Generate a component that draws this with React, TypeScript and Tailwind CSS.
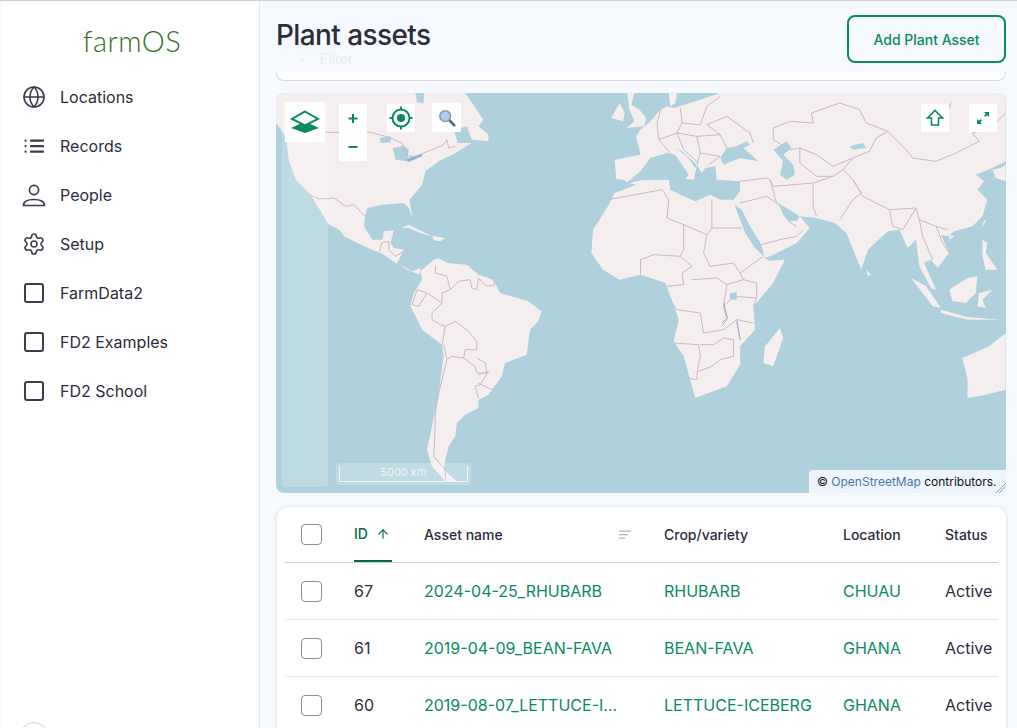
import React from 'react';
import { ArrowUp, Globe, Settings } from 'lucide-react';

const navItems = ['Locations', 'Records', 'People', 'Setup', 'FarmData2', 'FD2 Examples', 'FD2 School'];

const rows = [
    { id: 67, name: '2024-04-25_RHUBARB', crop: 'RHUBARB', location: 'CHUAU' },
    { id: 61, name: '2019-04-09_BEAN-FAVA', crop: 'BEAN-FAVA', location: 'GHANA' },
    { id: 60, name: '2019-08-07_LETTUCE-ICEBERG', crop: 'LETTUCE-ICEBERG', location: 'GHANA' },
];

// map shapes, traced at 3x of the map box
const westLand = [
    '0,0 420,0 425,28 445,30 445,0 570,0 625,80 610,100 640,125 640,145 590,140 575,100 535,110 548,150 590,150 535,183 490,205 450,235 440,275 402,320 412,378 400,345 385,330 320,335 275,345 268,370 265,400 290,440 320,440 325,415 355,412 345,450 355,465 385,470 375,490 365,510 410,535 435,525 432,545 395,530 360,510 320,482 270,462 205,430 190,410 160,395 125,340 105,305 60,260 38,200 30,130 0,90',
    '435,535 475,500 490,495 515,510 575,515 610,545 655,560 675,600 760,625 800,655 790,685 765,710 755,785 690,810 680,850 640,905 610,920 610,945 570,965 545,990 540,1030 520,1060 510,1100 505,1130 545,1165 510,1165 470,1120 455,1070 470,1000 490,900 505,790 500,755 440,710 405,640 415,600 440,560',
    '378,405 400,395 440,415 470,430 440,422 400,405',
    '470,428 510,435 495,445 475,442',
    '1010,75 1035,30 1050,60 1045,85',
    '1058,0 1080,0 1070,35 1095,50 1115,75 1110,100 1055,105 1080,85 1065,50',
];

const westBorders = [
    '100,305 130,318 175,315 210,340 235,335 268,370',
    '148,118 285,118 330,130 380,150 395,190 420,190 470,170 505,155 515,140 520,165 540,160',
    '312,476 318,450 340,445 340,470 360,490 385,475',
    '365,510 385,525',
    '480,520 480,540 515,550 525,590 500,600 500,630 455,600 425,590 410,635 430,640 455,600',
    '500,630 470,660 470,680 495,695 510,700 500,755',
    '510,700 540,685 580,715 605,745 605,770 570,770 565,795 600,820 605,840 635,840 630,810 605,795',
    '505,755 515,800 505,840 490,900 480,960 478,1040 475,1090 510,1130 510,1160',
    '515,800 530,790 565,795',
    '610,845 640,835 615,875 600,880 610,915',
    '610,870 650,890',
    '525,590 550,565 585,560 590,585 605,590 610,555 635,580 660,575 650,550',
    '953,412 975,410 1000,365 1025,355 1098,410',
    '1025,355 1045,380 1052,465 985,465 955,460',
    '985,465 1000,500 985,515 1030,545',
    '1052,465 1075,490 1098,470',
    '1030,510 1075,515 1070,555 1098,505',
];

const eastLand = [
    '1100,0 1100,205 1060,225 1010,245 1035,265 1015,290 1045,320 1030,370 1000,400 945,415 925,430 905,425 930,480 895,525 875,500 850,510 845,490 890,590 875,585 840,520 830,440 805,465 780,410 745,415 685,470 665,530 620,420 585,390 530,375 480,370 510,405 470,450 390,490 372,495 390,503 435,500 400,570 340,640 345,710 300,760 300,815 260,880 165,915 130,790 100,745 115,680 100,635 75,570 0,545 -63,560 -113,530 -148,480 -143,410 -98,340 -78,300 -13,275 -38,270 -48,262 -73,258 -78,200 0,185 -13,130 0,110 25,90 60,50 80,40 100,45 180,20 240,0',
    '375,760 420,705 430,735 400,820 370,810',
    '680,530 695,545 685,550',
    '815,555 860,580 905,645 880,640',
    '905,650 985,672 1085,680 985,680 905,660',
    '930,590 985,555 1015,550 1010,600 980,630 940,625',
    '1020,600 1060,590 1030,620 1040,645 1015,640',
    '1030,440 1045,450 1040,480 1075,530 1040,530 1030,490',
    '1035,380 1040,385 1028,405',
    '930,425 945,430 930,440',
    '1060,230 1085,225 1100,215 1100,265 1070,255',
    '970,795 1050,760 1100,720 1100,890 1040,905 985,915 985,860',
    '85,0 110,0 105,30 90,40',
];

const eastWater = [
    '-40,268 0,235 30,195 80,180 105,185 145,245 135,258 160,260 170,215 185,240 195,225 225,220 230,260 300,265 300,295 280,320 240,320 210,305 165,325 130,310 90,290 85,260 0,262 -40,272',
    '105,165 125,175 170,215 165,225 140,190',
    '240,195 260,165 290,160 320,145 330,155 310,165 355,205 300,195 250,215',
    '400,170 440,145 455,165 430,185 460,215 465,245 440,260 420,245 430,205',
    '283,335 305,350 330,400 365,455 372,490 345,465 315,420',
    '415,330 440,345 480,370 470,385 445,385 430,365',
    '270,600 290,598 290,620 270,620',
    '630,160 670,150 680,165 640,170',
    '920,50 938,25 925,65',
];

const eastBorders = [
    '400,140 400,105 450,85 520,90 515,60 600,30 660,50 680,90 745,115 800,170 820,195 890,205 950,180 1020,145 1000,120 1060,100 1100,60',
    '400,140 450,170 480,165 530,185 580,220 640,195 690,175 710,135 745,115',
    '640,195 610,230 640,260 670,310 750,350 830,345 840,380 890,400 925,410',
    '640,260 665,300 640,320 600,380',
    '520,270 520,340 530,370',
    '400,280 520,270 580,250 610,230',
    '480,165 480,210 530,250 580,250',
    '390,260 410,330 420,340',
    '300,265 380,255 390,260 400,280',
    '300,330 380,310 410,330',
    '365,455 420,440 470,430 490,410',
    '445,385 470,400',
    '750,350 760,400 790,410 830,345',
    '840,380 850,430 880,500',
    '890,400 910,450 930,480',
    '65,290 85,320 80,375 130,395 130,470 120,490',
    '-98,320 65,290',
    '215,320 215,405 305,405',
    '130,395 200,425 190,480 210,520 280,510 300,540 370,490',
    '200,425 215,405',
    '120,490 40,485 0,500 0,545',
    '120,490 155,520 125,540 130,575 80,580',
    '155,560 230,555 260,575 310,560 300,540',
    '310,560 350,570 350,615 340,640',
    '260,575 250,640 280,610 350,615',
    '100,635 110,650 180,660 190,720 250,710 290,680 340,690',
    '100,750 175,755 180,790 170,840 170,860 140,855',
    '180,755 220,755 250,735 280,740 280,790 240,800 215,820 175,835',
    '250,640 260,680 245,700',
    '290,680 300,740',
    '60,50 50,90 55,140 90,180',
    '120,45 125,90 180,95 200,40 240,10',
    '200,95 260,70 330,120 340,150',
    '55,140 110,120 170,130 240,125 260,165',
    '110,120 130,170 175,210',
    '170,130 180,180 240,190',
    '180,180 170,215',
    '125,90 110,120',
    '200,95 240,125',
    '240,190 205,215',
];

function WorldMap() {
    return (
        <svg viewBox="0 0 2199 1200" className="w-full h-full block" preserveAspectRatio="none">
            <rect width="2199" height="1200" fill="#aed1dd" />
            {westLand.map((p) => (
                <polygon key={p} points={p} fill="#f5eeee" />
            ))}
            {/* great lakes */}
            <polygon points="312,135 345,130 345,148 315,150" fill="#aed1dd" />
            <polygon points="352,165 385,158 400,170 395,205 360,200" fill="#aed1dd" />
            <polygon points="392,198 440,182 440,190 398,208" fill="#8fb3cf" />
            {westBorders.map((p) => (
                <polyline key={p} points={p} fill="none" stroke="#cbb6ca" strokeWidth="3" />
            ))}
            <g transform="translate(1098 0)">
                {eastLand.map((p) => (
                    <polygon key={p} points={p} fill="#f5eeee" />
                ))}
                {eastBorders.map((p) => (
                    <polyline key={p} points={p} fill="none" stroke="#cbb6ca" strokeWidth="3" />
                ))}
                {eastWater.map((p) => (
                    <polygon key={p} points={p} fill="#aed1dd" />
                ))}
                <polyline points="250,630 262,675 245,690" fill="none" stroke="#8fb3cf" strokeWidth="3" />
                <polyline points="290,685 300,740" fill="none" stroke="#8fb3cf" strokeWidth="3" />
            </g>
        </svg>
    );
}

function NavIcon({ name }: { name: string }) {
    if (name === 'Locations') return <Globe className="w-6 h-6" strokeWidth={1.6} />;
    if (name === 'Setup') return <Settings className="w-6 h-6" strokeWidth={1.6} />;
    if (name === 'Records') {
        return (
            <svg viewBox="0 0 24 24" className="w-6 h-6" fill="#3b3d4c">
                <rect x="8" y="5.5" width="14" height="2.2" rx="0.4" />
                <rect x="8" y="11" width="14" height="2.2" rx="0.4" />
                <rect x="8" y="16.5" width="14" height="2.2" rx="0.4" />
                <rect x="2.5" y="5.5" width="2.2" height="2.2" rx="1" />
                <rect x="2.5" y="11" width="2.2" height="2.2" rx="1" />
                <rect x="2.5" y="16.5" width="2.2" height="2.2" rx="1" />
            </svg>
        );
    }
    if (name === 'People') {
        return (
            <svg viewBox="0 0 24 24" className="w-6 h-6" fill="none" stroke="#3b3d4c" strokeWidth="1.7">
                <circle cx="12" cy="7" r="4.6" />
                <path d="M1.5 22.5c0-4 4-6 10.500-6s10.500 2 10.500 6z" strokeLinejoin="round" />
            </svg>
        );
    }
    return (
        <svg viewBox="0 0 24 24" className="w-6 h-6" fill="none" stroke="#3b3d4c" strokeWidth="2">
            <rect x="3" y="3" width="18" height="18" rx="2" />
        </svg>
    );
}

function MapButton({ className, children }: { className: string; children: React.ReactNode }) {
    return <div className={`absolute bg-white flex items-center justify-center ${className}`}>{children}</div>;
}

function Checkbox() {
    return <div className="w-[21px] h-[21px] rounded-[4px] border border-[#8b8d9c] bg-white" />;
}

export default function App() {
    return (
        <div className="w-full h-screen overflow-hidden flex bg-[#f6f9fe] border-t border-[#cfcfcf] font-['Inter',sans-serif] text-[#2b2d3c]">
            <aside className="w-[258px] shrink-0 ml-[2px] bg-white border-r border-[#e6e8ee] relative">
                <div className="h-[71px] flex items-center justify-center pl-[3px] pt-[7px]">
                    <span className="font-['Lato',sans-serif] font-light text-[29px] leading-none tracking-[0.5px] text-[#2f6f2c]">
                        farmOS
                    </span>
                </div>
                <nav className="flex flex-col">
                    {navItems.map((item) => (
                        <div key={item} className="h-[49px] flex items-center pl-[20px] gap-[14px] text-[16px] text-[#2b2d3c]">
                            <span className="text-[#3b3d4c]">
                                <NavIcon name={item} />
                            </span>
                            {item}
                        </div>
                    ))}
                </nav>
                <div className="absolute left-[18px] top-[721px] w-[28px] h-[28px] rounded-full border border-[#d5d3e0]" />
            </aside>

            <main className="flex-1 min-w-0 pl-[16px] pr-[11px] relative">
                <div className="h-[71px] flex items-center justify-between">
                    <h1 className="text-[28px] font-medium tracking-[-0.6px] text-[#2b2d3c] pb-[4px]">Plant assets</h1>
                    <button className="w-[159px] h-[48px] mt-[5px] rounded-[8px] border-2 border-[#0a8a5f] text-[14px] font-medium text-[#0a8a5f]">
                        Add Plant Asset
                    </button>
                </div>
                <div className="absolute left-[39px] top-[47px] flex items-center gap-[13px] text-[14px] text-[#eaedf2]">
                    <span className="text-[10px]">⌄</span>
                    Filter
                </div>
                <div className="h-[9px] bg-white border border-t-0 border-[#d8d8e0] rounded-b-lg" />

                <div className="relative h-[400px] mt-[12px] rounded-lg overflow-hidden">
                    <WorldMap />

                    <div className="absolute left-[6px] top-[8px] w-[46px] h-[386px] rounded-[4px] bg-white/20" />
                    <div className="absolute left-[60px] top-[370px] w-[135px] h-[22px] rounded-[4px] bg-white/20 px-[3px] pt-[3px]">
                        <div className="h-[16px] border border-t-0 border-[#eef3f5] text-[11px] leading-[13px] text-center text-[#eef3f5]">
                            5000 km
                        </div>
                    </div>

                    <MapButton className="left-[9px] top-[9px] w-[40px] h-[40px]">
                        <svg viewBox="0 0 30 24" className="w-[30px] h-[24px]">
                            <path d="M15 12.500 L29 19 L15 24 L1 19z" fill="#0a8a5f" transform="translate(0 -1)" />
                            <path d="M15 1.500 L28 9 L15 15.500 L2 9z" fill="white" stroke="#0a8a5f" strokeWidth="2" />
                        </svg>
                    </MapButton>
                    <div className="absolute left-[63px] top-[11px] w-[28px] h-[57px] bg-white flex flex-col items-center text-[#0a8a5f]">
                        <svg viewBox="0 0 28 28" className="w-[28px] h-[28px]">
                            <path d="M14 10v9M9.500 14.500h9" stroke="#0a8a5f" strokeWidth="2" />
                        </svg>
                        <svg viewBox="0 0 28 28" className="w-[28px] h-[28px]">
                            <path d="M9.500 15h9" stroke="#0a8a5f" strokeWidth="2" />
                        </svg>
                    </div>
                    <MapButton className="left-[111px] top-[11px] w-[28px] h-[28px]">
                        <svg viewBox="0 0 24 24" className="w-[24px] h-[24px]" fill="none" stroke="#0a8a5f" strokeWidth="2">
                            <circle cx="12" cy="12" r="8.500" />
                            <circle cx="12" cy="12" r="4" fill="#0a8a5f" stroke="none" />
                            <path d="M12 0.500v3.500M12 20v3.500M0.500 12h3.500M20 12h3.500" />
                        </svg>
                    </MapButton>
                    <MapButton className="left-[156px] top-[10px] w-[29px] h-[29px]">
                        <svg viewBox="0 0 20 20" className="w-[18px] h-[18px]">
                            <path d="M12 12l6 6" stroke="#5f6b75" strokeWidth="3" strokeLinecap="round" />
                            <circle cx="8" cy="8" r="6" fill="#a9cdf0" stroke="#8a98a6" strokeWidth="1.600" />
                        </svg>
                    </MapButton>
                    <MapButton className="left-[645px] top-[11px] w-[28px] h-[28px]">
                        <svg viewBox="0 0 18 18" className="w-[18px] h-[18px]">
                            <path d="M9 1.500L16.500 9H12.500V16H5.500V9H1.500z" fill="white" stroke="#0a8a5f" strokeWidth="1.600" />
                        </svg>
                    </MapButton>
                    <MapButton className="left-[693px] top-[11px] w-[28px] h-[28px]">
                        <svg viewBox="0 0 12 12" className="w-[12px] h-[12px]" fill="#0a8a5f">
                            <path d="M7 0h5v5l-1.800-1.800-1.700 1.700-1.400-1.400 1.700-1.700z" />
                            <path d="M5 12H0V7l1.800 1.800 1.700-1.700 1.400 1.400-1.700 1.700z" />
                        </svg>
                    </MapButton>

                    <div className="absolute right-0 bottom-0 w-[197px] h-[23px] bg-[#eff5fd] rounded-tl-[4px] flex items-center pl-[8px] text-[12px] text-[#111] whitespace-nowrap">
                        ©&nbsp;<span className="text-[#4a76a8]">OpenStreetMap</span>&nbsp;contributors.
                        <svg viewBox="0 0 10 10" className="absolute right-0 bottom-0 w-[10px] h-[10px]" stroke="#8a8a8a" strokeWidth="0.800">
                            <path d="M10 0L0 10M10 3L3 10M10 6L6 10" />
                        </svg>
                    </div>
                </div>

                <div className="mt-[13px] w-[731px] bg-white rounded-t-xl border border-[#eceef2] shadow-sm px-[8px]">
                    <div className="grid grid-cols-[53px_70px_240px_179px_102px_70px] h-[56px] items-center border-b border-[#cfcfd4] text-[14px] font-medium text-[#2b2d3c]">
                        <div className="pl-[16px]">
                            <Checkbox />
                        </div>
                        <div className="pl-[16px] h-full">
                            <div className="w-[38px] h-full flex items-center gap-[8px] border-b-2 border-[#046b49] text-[#046b49]">
                                ID
                                <ArrowUp className="w-[14px] h-[14px]" strokeWidth={2} />
                            </div>
                        </div>
                        <div className="pl-[16px] pr-[17px] flex items-center justify-between">
                            Asset name
                            <svg viewBox="0 0 12 10" className="w-[12px] h-[10px]" fill="#b5b5b9">
                                <rect x="0" y="0.500" width="12" height="1.300" />
                                <rect x="0" y="4" width="9" height="1.300" />
                                <rect x="0" y="7.500" width="6" height="1.300" />
                            </svg>
                        </div>
                        <div className="pl-[16px]">Crop/variety</div>
                        <div className="pl-[16px]">Location</div>
                        <div className="pl-[16px]">Status</div>
                    </div>
                    {rows.map((row) => (
                        <div
                            key={row.id}
                            className="grid grid-cols-[53px_70px_240px_179px_102px_70px] h-[57px] items-center border-b border-[#e6e6ea] text-[16px]"
                        >
                            <div className="pl-[16px]">
                                <Checkbox />
                            </div>
                            <div className="pl-[16px]">{row.id}</div>
                            <div className="pl-[16px] pr-[20px] truncate text-[#0a8a5f]">{row.name}</div>
                            <div className="pl-[16px] text-[#0a8a5f]">{row.crop}</div>
                            <div className="pl-[16px] text-[#0a8a5f]">{row.location}</div>
                            <div className="pl-[16px]">Active</div>
                        </div>
                    ))}
                </div>
            </main>
        </div>
    );
}
